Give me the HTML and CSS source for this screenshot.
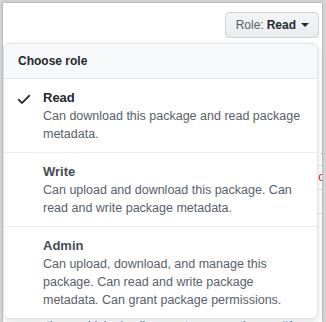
FILE: index.html
```html
<!DOCTYPE html>
<html>
	<head>
		<meta charset="utf-8">
		<title>Role</title>
		<link rel="stylesheet" href="styles.css">
	</head>
	<body>
		<div class="frame">
			<div class="page">
				<div class="toolbar">
					<button class="role-btn" type="button">
						<span class="role-label">Role:</span>
						<span class="role-value">Read</span>
						<span class="caret"></span>
					</button>
				</div>

				<div class="page-rows">
					<div class="diff-row"><span class="mark">-</span></div>
					<div class="diff-row"><span class="mark">Mo</span></div>
					<div class="diff-row"></div>
				</div>

				<div class="page-links">
					<a href="#">mention</a>
					<a href="#">Linked pull requests</a>
					<a href="#">mention</a>
					<a href="#">#1 mention</a>
				</div>
			</div>

			<div class="menu">
				<div class="menu-header">Choose role</div>

				<div class="menu-item selected">
					<svg class="check" width="16" height="16" viewBox="0 0 16 16">
						<path d="M13.78 4.22a.75.75 0 010 1.06l-7.25 7.25a.75.75 0 01-1.06 0L2.22 9.28a.75.75 0 011.06-1.06L6 10.94l6.72-6.72a.75.75 0 011.06 0z"/>
					</svg>
					<div class="item-text">
						<div class="item-title">Read</div>
						<div class="item-desc">Can download this package and read package metadata.</div>
					</div>
				</div>

				<div class="menu-item">
					<span class="check-slot"></span>
					<div class="item-text">
						<div class="item-title">Write</div>
						<div class="item-desc">Can upload and download this package. Can read and write package metadata.</div>
					</div>
				</div>

				<div class="menu-item">
					<span class="check-slot"></span>
					<div class="item-text">
						<div class="item-title">Admin</div>
						<div class="item-desc">Can upload, download, and manage this package. Can read and write package metadata. Can grant package permissions.</div>
					</div>
				</div>
			</div>
		</div>
	</body>
</html>
```

FILE: styles.css
```css
:root {
	--text: #24292e;
	--muted: #586069;
	--border: #e1e4e8;
	--divider: #eaecef;
	--header-bg: #f6f8fa;
	--link: #0366d6;
	--red: #cb2431;
}

html, body {
	margin: 0;
	height: 100%;
}

body {
	background-color: #d3d3d3;
	font-family: "Liberation Sans", Arial, sans-serif;
	color: var(--text);
	overflow: hidden;
}

.frame {
	position: relative;
	margin: 3px 4px 0 3px;
	height: calc(100% - 3px);
	background-color: #fff;
	box-shadow: 0 0 2px rgba(0, 0, 0, 0.35);
	overflow: hidden;
}

.page {
	padding: 9px 3px 0 0;
}

.toolbar {
	display: flex;
	justify-content: flex-end;
}

.role-btn {
	display: flex;
	align-items: center;
	height: 26px;
	padding: 0 9px 0 10px;
	font-family: inherit;
	font-size: 12px;
	line-height: 24px;
	color: var(--text);
	background: linear-gradient(#f3f4f6, #ebedf0);
	border: 1px solid #cfd3d8;
	border-radius: 4px;
}

.role-label {
	color: var(--muted);
	margin-right: 3px;
}

.role-value {
	font-weight: bold;
}

.caret {
	margin-left: 5px;
	border-top: 4px solid var(--text);
	border-left: 4px solid transparent;
	border-right: 4px solid transparent;
}

.page-rows {
	margin: 104px -6px 0 0;
}

.diff-row {
	display: flex;
	justify-content: flex-end;
	height: 23px;
	border-bottom: 1px solid var(--border);
	font-size: 12px;
	line-height: 23px;
	color: var(--red);
}

.page-links {
	display: flex;
	gap: 22px;
	margin-top: 104px;
	padding-left: 20px;
	font-size: 12px;
	line-height: 16px;
	white-space: nowrap;
}

.page-links a {
	color: var(--link);
	text-decoration: none;
}

/* dropdown */

.menu {
	position: absolute;
	top: 40px;
	left: 0;
	width: 315px;
	box-sizing: border-box;
	background-color: #fff;
	border: 1px solid var(--border);
	border-radius: 6px;
	box-shadow: 0 2px 6px rgba(27, 31, 35, 0.15);
	overflow: hidden;
}

.menu-header {
	height: 34px;
	padding-left: 14px;
	font-size: 12px;
	font-weight: bold;
	line-height: 34px;
	background-color: var(--header-bg);
	border-bottom: 1px solid var(--border);
}

.menu-item {
	display: flex;
	align-items: flex-start;
	padding: 10px 11px 9px 12px;
}

.menu-item + .menu-item {
	border-top: 1px solid var(--divider);
}

.check,
.check-slot {
	flex: none;
	width: 16px;
	height: 16px;
	margin: 2px 11px 0 0;
}

.check {
	fill: var(--text);
	stroke: var(--text);
	stroke-width: 0.5;
}

.item-text {
	flex: 1;
}

.item-title {
	font-size: 13px;
	font-weight: bold;
	line-height: 18px;
	color: #444d56;
}

.selected .item-title {
	color: var(--text);
}

.item-desc {
	font-size: 12.5px;
	line-height: 18px;
	color: var(--muted);
}
```
